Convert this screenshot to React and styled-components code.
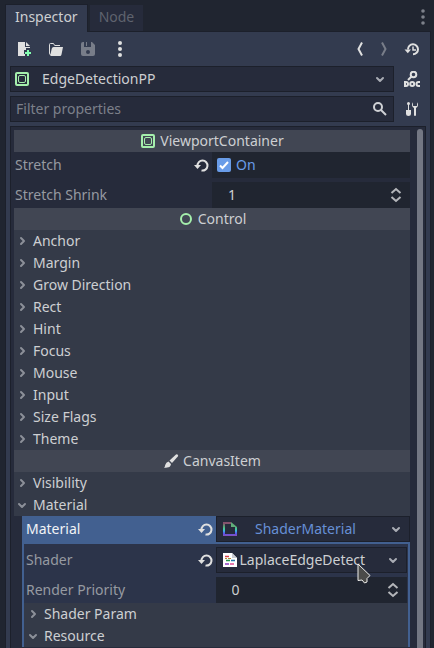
import React from "react";
import styled, { createGlobalStyle } from "styled-components";

const c = {
  base: "#333b4f",
  dark: "#262b3b",
  darker: "#202530",
  line: "#1c202b",
  category: "#414653",
  section: "#343a48",
  sub: "#2c344a",
  blue: "#426090",
  accent: "#699ce8",
  green: "#a5efac",
  icon: "#e0e0e0",
};

const Global = createGlobalStyle`
  * { box-sizing: border-box; }
  body { margin: 0; background: ${c.darker}; }
  button, input, select {
    appearance: none; border: 0; border-radius: 0; margin: 0; padding: 0;
    background: none; color: inherit; font: inherit; outline: 0;
  }
`;

const Dock = styled.main`
  height: 100vh;
  overflow: hidden;
  display: flex;
  flex-direction: column;
  padding: 4px 3px 0 5px;
  color: #cdcfd2;
  font: 14px/22px "Noto Sans", sans-serif;
`;
const Tabs = styled.div`
  display: flex;
  gap: 1px;
  height: 28px;
  flex: none;
  position: relative;
  z-index: 1;
`;
const Tab = styled.button`
  padding: 0 9px 3px;
  height: ${(p) => (p.$active ? 28 : 27)}px;
  border: 1px solid ${(p) => (p.$active ? c.line : "transparent")};
  border-bottom: 0;
  background: ${(p) => (p.$active ? c.base : c.dark)};
  background-clip: padding-box;
  color: ${(p) => (p.$active ? "#cdcfd2" : "#5f636e")};
`;
const DockMenu = styled.button`
  margin-left: auto;
  width: 16px;
  height: 26px;
  display: grid;
  place-items: center;
  color: #7d818a;
`;
const Panel = styled.section`
  flex: 1;
  min-height: 0;
  display: flex;
  flex-direction: column;
  gap: 4px;
  margin-top: -1px;
  padding: 4px 4px 0;
  border: 1px solid ${c.line};
  border-bottom: 0;
  background: ${c.base};
`;
const Toolbar = styled.div`
  display: flex;
  align-items: center;
  justify-content: space-between;
  flex: none;
  height: 26px;
  padding: 0 2px;
`;
const ToolGroup = styled.div`
  display: flex;
  gap: ${(p) => p.$gap}px;
`;
const IconButton = styled.button`
  width: 24px;
  height: 26px;
  flex: none;
  display: grid;
  place-items: center;
  color: ${c.icon};
  opacity: ${(p) => (p.disabled ? 0.4 : 1)};
`;
const ToolLine = styled.div`
  display: grid;
  grid-template-columns: minmax(0, 1fr) 24px;
  gap: 6px;
  flex: none;
  padding-right: 2px;
`;
const Field = styled.div`
  display: grid;
  grid-template-columns: ${(p) => p.$lead || 22}px minmax(0, 1fr) ${(p) => (p.$flat ? 28 : 26)}px;
  align-items: center;
  justify-items: center;
  height: 26px;
  border: ${(p) => (p.$flat ? 0 : 1)}px solid ${c.line};
  background: ${(p) => (p.$flat ? c.darker : c.dark)};
  svg {
    grid-area: 1 / 1;
    pointer-events: none;
  }
  svg:last-child {
    grid-column: 3;
  }
`;
const control = `
  grid-area: 1 / 1 / 2 / 4;
  width: 100%;
  height: 100%;
`;
const Select = styled.select`
  ${control}
  padding: 0 24px 0 ${(p) => p.$inset}px;
  color: ${(p) => (p.$accent ? "#6690d6" : "inherit")};
  option { color: #cdcfd2; background: ${c.dark}; }
`;
const Search = styled.input`
  ${control}
  padding: 0 28px 2px 5px;
  &::placeholder { color: #7c808a; opacity: 1; }
  &::-webkit-search-cancel-button { display: none; }
`;
const NumberInput = styled.input`
  ${control}
  padding: 0 28px 2px 16px;
  appearance: textfield;
  &::-webkit-inner-spin-button { display: none; }
`;
const Scroll = styled.div`
  flex: 1;
  min-height: 0;
  overflow: hidden;
  display: grid;
  grid-template-columns: minmax(0, 1fr) 6px;
  gap: 7px;
  padding: 3px 2px 0 3px;
  border: 1px solid ${c.line};
  border-bottom: 0;
  background: ${c.dark};
`;
const Bar = styled.div`
  border-radius: 3px 3px 0 0;
  background: #737783;
  margin-top: -1px;
`;
const Category = styled.h2`
  display: flex;
  align-items: center;
  justify-content: center;
  gap: 4px;
  height: 22px;
  margin: 0;
  background: ${c.category};
  font: inherit;
`;
const Rows = styled.div`
  display: grid;
  gap: 4px;
`;
const Row = styled.div`
  display: grid;
  grid-template-columns: repeat(2, minmax(0, 1fr));
  height: 26px;
`;
const RowName = styled.div`
  display: flex;
  align-items: center;
  justify-content: space-between;
  padding: 0 3px 0 ${(p) => (p.$nested ? 2 : 1)}px;
  color: #969aa1;
`;
const Revert = styled.button`
  width: 16px;
  height: 16px;
  color: ${c.icon};
  svg { display: block; }
`;
const CheckField = styled.label`
  display: flex;
  align-items: center;
  gap: 4px;
  padding-left: 4px;
  background: ${c.darker};
  color: ${c.accent};
`;
const Tick = styled.span`
  display: grid;
  width: 16px;
  height: 16px;
  > * { grid-area: 1 / 1; }
  svg { pointer-events: none; visibility: hidden; }
  input:checked + svg { visibility: visible; }
`;
const CheckBox = styled.input`
  && { border-radius: 2px; }
  width: 14px;
  height: 14px;
  place-self: center;
  background: ${c.dark};
  &:checked { background: ${c.accent}; }
`;
const Folder = styled.button`
  display: flex;
  align-items: center;
  gap: 3px;
  width: 100%;
  height: 22px;
  background: ${c.section};
  text-align: left;
  padding-left: ${(p) => (p.$nested ? 1 : 0)}px;
  svg { color: #8c9099; }
`;
const Resource = styled.div`
  margin-left: 8px;
`;
const ResourceHead = styled.div`
  display: grid;
  grid-template-columns: repeat(2, minmax(0, 1fr));
  height: 26px;
`;
const ResourceName = styled.div`
  display: flex;
  align-items: center;
  justify-content: space-between;
  padding: 0 3px 0 4px;
  background: ${c.blue};
  color: #f1f3f6;
`;
const ResourceBody = styled.div`
  border: 2px solid ${c.blue};
  border-bottom: 0;
  background: ${c.sub};
`;
const ResourceRows = styled(Rows)`
  padding: 3px 1px 0 0;
`;
const Pointer = styled.svg`
  position: absolute;
  left: 356px;
  top: 561px;
  pointer-events: none;
`;

const Svg = ({ children, w = 16, h = 16, ...rest }) => (
  <svg width={w} height={h} viewBox={`0 0 ${w} ${h}`} fill="none" aria-hidden="true" {...rest}>
    {children}
  </svg>
);
const Dots = ({ r = 2, gap = 6 }) => (
  <Svg fill="currentColor">
    {[8 - gap, 8, 8 + gap].map((y) => <circle key={y} cx="8" cy={y} r={r} />)}
  </Svg>
);
const NewFile = () => (
  <Svg fill="currentColor">
    <path d="M2 1v14h7v-2H8v-4h2V7h4V6H9V1zM10 1v4h4z" />
    <path d="M11 9h2v2h2v2h-2v2h-2v-2H9v-2h2z" fill="#84ffb1" />
  </Svg>
);
const Open = () => (
  <Svg>
    <path d="M2.500 14Q1.500 13 1.500 12V3.500q0-1 1-1h3l1.200 2H12" stroke="currentColor" />
    <path d="M5.500 6H15l-1.500 7.500Q13.200 15 12 15H3q-.9 0-.7-1l1.500-6.500Q4.200 6 5.500 6z" fill="currentColor" />
  </Svg>
);
const Save = () => (
  <Svg>
    <path
      d="M3 1a2 2 0 0 0-2 2v10a2 2 0 0 0 2 2h10a2 2 0 0 0 2-2V4l-3-3h-1v5H4V1zM6 1v4h1V1zM8 9a2 2 0 1 1 0 4 2 2 0 0 1 0-4z"
      fill="currentColor" fillRule="evenodd"
    />
  </Svg>
);
const Angle = ({ flip }) => (
  <Svg><path d={flip ? "M6 1.500 9.500 8 6 14.500" : "M10 1.500 6.500 8 10 14.500"} stroke="currentColor" strokeWidth="2" /></Svg>
);
const History = () => (
  <Svg>
    <path d="M4 8.500a5 5 0 1 1 5 4.800" stroke="currentColor" strokeWidth="2" />
    <path d="M.5 8.500h6.500l-3.200 3.800z" fill="currentColor" />
    <path d="M9 5.500V9h3" stroke="currentColor" strokeWidth="1.500" />
  </Svg>
);
const Doc = () => (
  <Svg>
    <circle cx="9.500" cy="3.500" r="2.800" stroke="currentColor" strokeWidth="2" />
    <path d="M7.500 5.500 4 9" stroke="currentColor" strokeWidth="2" />
    <path d="M1 11v4h1q2 0 2-2t-2-2zM16 11h-1.500q-2 0-2 2t2 2H16" stroke="currentColor" strokeWidth="2" />
    <circle cx="8.200" cy="13" r="2" stroke="currentColor" strokeWidth="2" />
  </Svg>
);
const Tools = () => (
  <Svg fill="currentColor">
    <circle cx="4.500" cy="2.500" r="1.500" />
    <path d="M4 2h1v7h2v4q0 2-2.500 2T2 13V9h2z" />
    <path d="M9 1.200Q8 2.200 8 4q0 2.200 2 3v7q0 1 1 1t1-1V7q2-.8 2-3 0-1.800-1-2.800V4.500q0 .5-.5.500h-3q-.5 0-.5-.5z" />
  </Svg>
);
const Lens = () => (
  <Svg>
    <circle cx="6" cy="6" r="4" stroke="#cfd1d5" strokeWidth="2" />
    <path d="m9 9 5 5" stroke="#cfd1d5" strokeWidth="2" />
  </Svg>
);
const Viewport = () => (
  <Svg>
    <rect x="2" y="2" width="12" height="12" rx="1" stroke={c.green} strokeWidth="2" />
    <rect x="4.500" y="4.500" width="7" height="7" rx="1.500" stroke={c.green} />
  </Svg>
);
const Ring = () => <Svg><circle cx="8" cy="8" r="5" stroke={c.green} strokeWidth="2" /></Svg>;
const Brush = () => (
  <Svg fill={c.icon}>
    <path d="M13 1.500q1-.7 1.800.2t0 1.800L9 10 6.500 7.500z" />
    <path d="M5.500 8.500 8 11q-.5 3.500-4 3.500Q2 15 1 14.500q1-.5 1.200-2.500Q3 9 5.500 8.500z" />
  </Svg>
);
const Undo = () => (
  <Svg>
    <path d="M4.500 9a5 5 0 1 1 4 4.500" stroke="currentColor" strokeWidth="2" />
    <path d="M1 8h7l-3.500 4z" fill="currentColor" />
  </Svg>
);
const Arrow = ({ open }) => (
  <Svg><path d={open ? "m5 7 3 3 3-3" : "m7 5 3 3-3 3"} stroke="currentColor" strokeWidth="2" strokeLinecap="round" strokeLinejoin="round" /></Svg>
);
const Down = () => <Svg color="#a9acb4"><path d="m5 7 3 3 3-3" stroke="currentColor" strokeWidth="2" strokeLinecap="round" strokeLinejoin="round" /></Svg>;
const Steps = () => <Svg><path d="M3.500 6 8 2l4.500 4M3.500 10 8 14l4.500-4" stroke="#b4b6ba" strokeWidth="2" /></Svg>;
const MaterialIcon = () => (
  <Svg>
    <defs>
      <linearGradient id="hue" x1="0" y1="1" x2="0" y2="15" gradientUnits="userSpaceOnUse">
        <stop offset=".1" stopColor="#86516d" />
        <stop offset=".3" stopColor="#5c9c70" />
        <stop offset=".5" stopColor="#45cfa0" />
        <stop offset=".65" stopColor="#3caee8" />
        <stop offset=".8" stopColor="#5553f0" />
        <stop offset="1" stopColor="#8851b5" />
      </linearGradient>
    </defs>
    <path d="M9 2H2v12h12V6" stroke="url(#hue)" strokeWidth="2" />
    <path d="M9 1v5h6z" fill="#60ad79" />
  </Svg>
);
const ShaderIcon = () => (
  <Svg>
    <path d="M1 1h9l5 5v9H1z" fill="#fff" />
    <path d="M3 4.500h4" stroke="#d8404a" strokeWidth="1.500" />
    <path d="M3 6.500h2M6 6.500h3" stroke="#b88a32" />
    <path d="M4 8.500h4" stroke="#27954b" strokeWidth="1.500" />
    <path d="M9 8.500h4" stroke="#2278a8" strokeWidth="1.500" />
    <path d="M3 12h4" stroke="#8b3bc0" strokeWidth="1.500" />
    <path d="M8 12h4" stroke="#df4d91" strokeWidth="1.500" />
    <path d="M10 1v5h5z" fill="#c9cbd0" />
  </Svg>
);

const RevertButton = () => <Revert aria-label="Revert to default"><Undo /></Revert>;
const NumberRow = ({ id, name, value, nested }) => (
  <Row>
    <RowName as="label" htmlFor={id} $nested={nested}>{name}</RowName>
    <Field $flat>
      <NumberInput id={id} type="number" defaultValue={value} />
      <Steps />
    </Field>
  </Row>
);
const folders = ["Anchor", "Margin", "Grow Direction", "Rect", "Hint", "Focus", "Mouse", "Input", "Size Flags", "Theme"];
const Section = ({ name, open, nested }) => (
  <Folder aria-expanded={!!open} $nested={nested}><Arrow open={open} />{name}</Folder>
);

export default function App() {
  return (
    <Dock>
      <Global />
      <Tabs role="tablist">
        <Tab role="tab" aria-selected="true" $active>Inspector</Tab>
        <Tab role="tab" aria-selected="false">Node</Tab>
        <DockMenu aria-label="Dock options"><Dots r={1.8} /></DockMenu>
      </Tabs>
      <Panel>
        <Toolbar>
          <ToolGroup $gap={8}>
            <IconButton aria-label="New resource"><NewFile /></IconButton>
            <IconButton aria-label="Load resource"><Open /></IconButton>
            <IconButton aria-label="Save resource" disabled><Save /></IconButton>
            <IconButton aria-label="More options"><Dots /></IconButton>
          </ToolGroup>
          <ToolGroup $gap={4}>
            <ToolGroup $gap={0}>
              <IconButton aria-label="Previous"><Angle /></IconButton>
              <IconButton aria-label="Next" disabled><Angle flip /></IconButton>
            </ToolGroup>
            <IconButton aria-label="History"><History /></IconButton>
          </ToolGroup>
        </Toolbar>
        <ToolLine>
          <Field>
            <Select aria-label="Edited object" $inset={31}><option>EdgeDetectionPP</option></Select>
            <Viewport />
            <Down />
          </Field>
          <IconButton aria-label="Open documentation"><Doc /></IconButton>
        </ToolLine>
        <ToolLine>
          <Field>
            <Search type="search" aria-label="Filter properties" placeholder="Filter properties" />
            <Lens />
          </Field>
          <IconButton aria-label="Object tools"><Tools /></IconButton>
        </ToolLine>
        <Scroll>
          <div>
            <Category><Viewport />ViewportContainer</Category>
            <Rows>
              <Row>
                <RowName>Stretch<RevertButton /></RowName>
                <CheckField>
                  <Tick>
                    <CheckBox type="checkbox" aria-label="Stretch" defaultChecked />
                    <Svg><path d="m4 8.500 2.500 2.500L12 5" stroke="#fff" strokeWidth="2" /></Svg>
                  </Tick>
                  On
                </CheckField>
              </Row>
              <NumberRow id="shrink" name="Stretch Shrink" value={1} />
            </Rows>
            <Category><Ring />Control</Category>
            {folders.map((name) => <Section key={name} name={name} />)}
            <Category><Brush />CanvasItem</Category>
            <Section name="Visibility" />
            <Section name="Material" open />
            <Resource>
              <ResourceHead>
                <ResourceName><label htmlFor="material">Material</label><RevertButton /></ResourceName>
                <Field $lead={26}>
                  <Select id="material" $inset={38} $accent><option>ShaderMaterial</option></Select>
                  <MaterialIcon />
                  <Down />
                </Field>
              </ResourceHead>
              <ResourceBody>
                <ResourceRows>
                  <Row>
                    <RowName $nested><label htmlFor="shader">Shader</label><RevertButton /></RowName>
                    <Field $lead={26}>
                      <Select id="shader" $inset={23}><option>LaplaceEdgeDetect</option></Select>
                      <ShaderIcon />
                      <Down />
                    </Field>
                  </Row>
                  <NumberRow id="priority" name="Render Priority" value={0} nested />
                </ResourceRows>
                <Section name="Shader Param" nested />
                <Section name="Resource" open nested />
              </ResourceBody>
            </Resource>
          </div>
          <Bar />
        </Scroll>
      </Panel>
      <Pointer width="16" height="24" viewBox="0 0 16 24" aria-hidden="true">
        <path d="M2 3v16.500l4-.5 2.500 3 2.500-1v-3.500l3-3z" fill="#4b4b49" stroke="#f0f0ed" strokeLinejoin="round" />
      </Pointer>
    </Dock>
  );
}
